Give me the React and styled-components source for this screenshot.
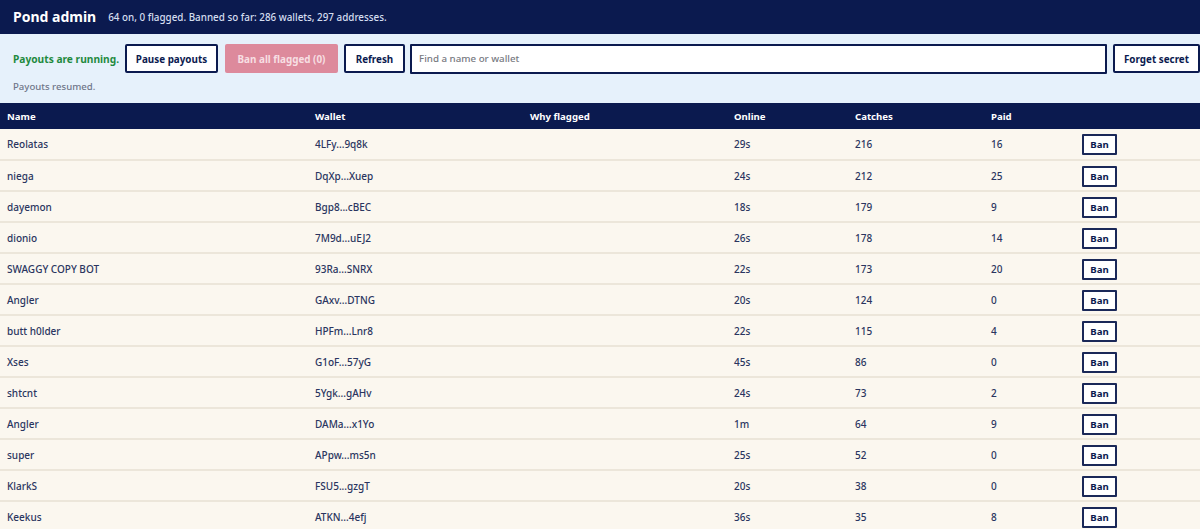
import React from "react";
import styled, { createGlobalStyle } from "styled-components";

const Global = createGlobalStyle`
  html, body { margin: 0; padding: 0; background: #fbf7ef; overflow: hidden; }
  body { font-family: "Noto Sans", "Open Sans", sans-serif; color: #0b1a4f; }
`;
const Page = styled.div`width: 1200px; height: 529px; overflow: hidden;`;
const Header = styled.header`
  height: 34px; background: #0b1a4f; color: #fff; display: flex; align-items: center;
  padding: 0 13px; gap: 12px; box-sizing: border-box;
`;
const Title = styled.h1`margin: 0; font-size: 14px; font-weight: 700; line-height: 1;`;
const Summary = styled.span`font-size: 9.85px; font-weight: 500; color: #d5def0;`;
const Toolbar = styled.section`
  height: 69px; background: #e6f1fb; box-sizing: border-box; padding: 9px 0 0 13px;
  display: flex; flex-direction: column; gap: 6px;
`;
const Controls = styled.div`display: flex; align-items: center; height: 31px; width: 1187px;`;
const Status = styled.strong`font-size: 10.2px; font-weight: 700; color: #1f8a3f; width: 113px; flex: none; white-space: nowrap;`;
const Button = styled.button`
  height: 29px; box-sizing: border-box; width: ${p => p.$w}px; margin-right: ${p => p.$mr}px;
  margin-left: ${p => p.$ml || 0}px;
  flex: none; padding: 0; background: ${p => p.$muted ? "#dd8a9c" : "#fff"};
  border: ${p => p.$muted ? "0" : "2px solid #0b1a4f"}; border-radius: 2px;
  color: ${p => p.$muted ? "#f7dfe3" : "#0b1a4f"};
  font: 700 9.85px "Noto Sans", sans-serif;
`;
const Search = styled.input`
  width: 697px; height: 30px; box-sizing: border-box; flex: none; margin-right: 6px; padding: 0 7px;
  border: 2px solid #0b1a4f; border-radius: 1px; background: #fff;
  font: 500 9.75px "Noto Sans", sans-serif; color: #0b1a4f;
  &::placeholder { color: #77797f; opacity: 1; }
`;
const Notice = styled.p`margin: 0; font-size: 9.6px; font-weight: 500; color: #6f7689;`;
const Table = styled.table`width: 1200px; border-collapse: collapse; table-layout: fixed;`;
const Th = styled.th`
  height: 26px; background: #0b1a4f; color: #fff; text-align: left; padding: 1px 0 0 7px;
  font-size: 9.6px; font-weight: 700; box-sizing: border-box;
`;
const Tr = styled.tr`background: #fbf7ef;`;
const Td = styled.td`
  height: 31px; padding: 0 0 0 7px; box-sizing: border-box; border-bottom: 2px solid #ece6da;
  font-size: 10px; font-weight: 500; color: #2a3560; white-space: nowrap;
`;
const Ban = styled.button`
  display: block; width: 35px; height: 21px; padding: 0; margin: 1px 0 0; box-sizing: border-box;
  background: #fff; border: 2px solid #1a2858; border-radius: 1px; color: #0b1a4f;
  font: 700 9.6px "Noto Sans", sans-serif;
`;

const widths = [308, 215, 204, 121, 136, 91, 125];
const heads = ["Name", "Wallet", "Why flagged", "Online", "Catches", "Paid", ""];
const rows = [
  ["Reolatas", "4LFy...9q8k", "29s", 216, 16],
  ["niega", "DqXp...Xuep", "24s", 212, 25],
  ["dayemon", "Bgp8...cBEC", "18s", 179, 9],
  ["dionio", "7M9d...uEJ2", "26s", 178, 14],
  ["SWAGGY COPY BOT", "93Ra...SNRX", "22s", 173, 20],
  ["Angler", "GAxv...DTNG", "20s", 124, 0],
  ["butt h0lder", "HPFm...Lnr8", "22s", 115, 4],
  ["Xses", "G1oF...57yG", "45s", 86, 0],
  ["shtcnt", "5Ygk...gAHv", "24s", 73, 2],
  ["Angler", "DAMa...x1Yo", "1m", 64, 9],
  ["super", "APpw...ms5n", "25s", 52, 0],
  ["KlarkS", "FSU5...gzgT", "20s", 38, 0],
  ["Keekus", "ATKN...4efj", "36s", 35, 8],
];

export default function App() {
  return (
    <Page>
      <Global />
      <Header>
        <Title>Pond admin</Title>
        <Summary>64 on, 0 flagged. Banned so far: 286 wallets, 297 addresses.</Summary>
      </Header>
      <Toolbar>
        <Controls>
          <Status>Payouts are running.</Status>
          <Button $w={93} $mr={6} $ml={-1}>Pause payouts</Button>
          <Button $w={113} $mr={6} $ml={1} $muted>Ban all flagged (0)</Button>
          <Button $w={61} $mr={5}>Refresh</Button>
          <Search placeholder="Find a name or wallet" />
          <Button $w={87} $mr={0}>Forget secret</Button>
        </Controls>
        <Notice>Payouts resumed.</Notice>
      </Toolbar>
      <Table>
        <colgroup>{widths.map((w, i) => <col key={i} width={w} />)}</colgroup>
        <thead><tr>{heads.map((h, i) => <Th key={i}>{h}</Th>)}</tr></thead>
        <tbody>
          {rows.map((r, i) => (
            <Tr key={i}>
              <Td>{r[0]}</Td><Td>{r[1]}</Td><Td />
              <Td>{r[2]}</Td><Td>{r[3]}</Td><Td>{r[4]}</Td>
              <Td><Ban>Ban</Ban></Td>
            </Tr>
          ))}
        </tbody>
      </Table>
    </Page>
  );
}
